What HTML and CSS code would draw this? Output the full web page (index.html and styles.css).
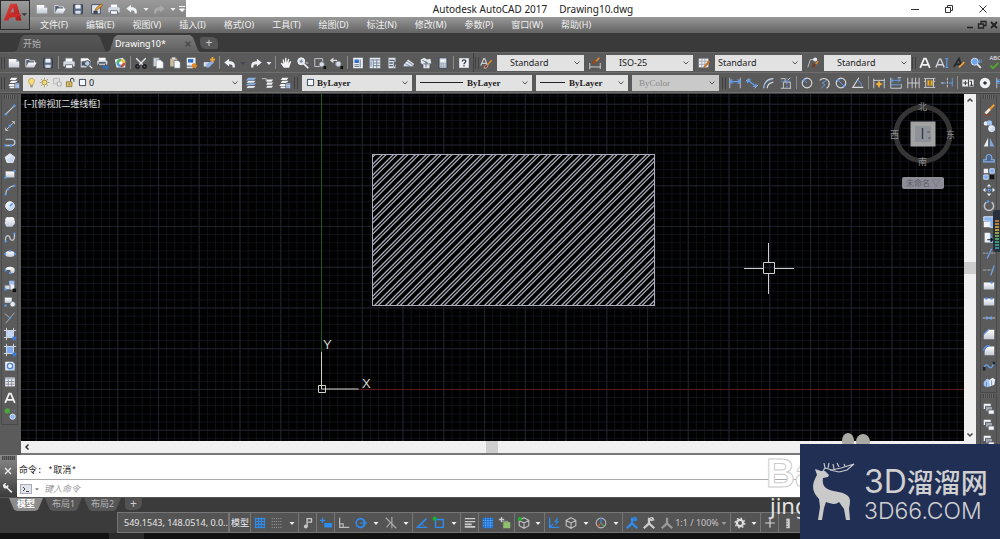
FILE: index.html
```html
<!DOCTYPE html>
<html lang="zh-CN">
<head>
<meta charset="utf-8">
<title>Autodesk AutoCAD 2017 - Drawing10.dwg</title>
<link rel="stylesheet" href="styles.css">
</head>
<body>
<svg class="defs" aria-hidden="true">
<defs>
<linearGradient id="gw" x1="0" y1="0" x2="0" y2="1"><stop offset="0" stop-color="#fff"/><stop offset="1" stop-color="#c3cad6"/></linearGradient>
<linearGradient id="gb" x1="0" y1="0" x2="1" y2="1"><stop offset="0" stop-color="#fff"/><stop offset="1" stop-color="#a9c4ea"/></linearGradient>
<linearGradient id="gr" x1="0" y1="0" x2="1" y2="1"><stop offset="0" stop-color="#e8453c"/><stop offset="1" stop-color="#a3161b"/></linearGradient>
</defs>
<symbol id="new" viewBox="0 0 16 16"><path d="M2 3.500h8.500l3.500 3V13H2z" fill="url(#gw)"/><path d="M10.500 3.500v3H14z" fill="#8d97a8"/></symbol>
<symbol id="open" viewBox="0 0 16 16"><path d="M2 12.500V4h4l1 1.500h5V8" fill="#56606e" stroke="#dfe4ec"/><path d="M2 13l3-5.500h9.500l-3 5.500z" fill="url(#gw)"/></symbol>
<symbol id="save" viewBox="0 0 16 16"><path d="M3 3h10v10.500H3z" fill="#5d6b84" stroke="#2c3648"/><path d="M5 3h6v4.500H5z" fill="#eef2f8"/><path d="M5 10h6v3.500H5z" fill="#d8dfea"/></symbol>
<symbol id="saveas" viewBox="0 0 16 16"><path d="M3 3h10v10.500H3z" fill="#e1e6ee" stroke="#3b4658"/><path d="M5 10h5v3.500H5z" fill="#3b4658"/><path d="M7 10l1-3 6-5 1.500 2-6 5z" fill="#e9a23b" stroke="#6b4a1b" stroke-width=".7"/></symbol>
<symbol id="print" viewBox="0 0 16 16"><path d="M4 2.500h8V7H4z" fill="#fff" stroke="#7f8a99" stroke-width=".7"/><rect x="1.500" y="6" width="13" height="6" rx="1.500" fill="#d3d9e3"/><path d="M4 10h8v4H4z" fill="#fff" stroke="#5c6777"/></symbol>
<symbol id="preview" viewBox="0 0 16 16"><path d="M2 2.500h8l3 3v5L8 13H2z" fill="url(#gw)"/><path d="M3 6h9v5H3z" fill="#4a5362"/><circle cx="9.500" cy="8.500" r="3.200" fill="#bcc8dc" stroke="#333c4a"/><path d="M12 11l3 3" stroke="#eee" stroke-width="1.600"/></symbol>
<symbol id="publish" viewBox="0 0 16 16"><path d="M3 2h8v4H3z" fill="#fff"/><rect x="1.500" y="5" width="11.500" height="5" rx="1" fill="#cdd4df"/><path d="M3 7.500h8M3 9h8v2H3z" stroke="#39424f" fill="#fff"/><path d="M7 12h4v-2l4 3-4 3v-2H7z" fill="#2b6fc4"/></symbol>
<symbol id="globe" viewBox="0 0 16 16"><path d="M2 4l9-2 3 3v8H4z" fill="#e9edf3"/><circle cx="9" cy="8" r="5" fill="#4aa3d8"/><path d="M9 3a5 5 0 0 1 5 5H9z" fill="#f0c342"/><path d="M9 13a5 5 0 0 0 5-5H9z" fill="#d64d3d"/><path d="M9 3a5 5 0 0 0-5 5l5 0z" fill="#53b56a"/><circle cx="9" cy="8" r="2" fill="#fff"/></symbol>
<symbol id="cut" viewBox="0 0 16 16"><path d="M2.500 2.500l8.500 8.500M13.500 2.500L5 11" stroke="#e9edf2" stroke-width="1.600"/><circle cx="4" cy="12" r="2" fill="none" stroke="#17191d" stroke-width="1.600"/><circle cx="12" cy="12" r="2" fill="none" stroke="#17191d" stroke-width="1.600"/></symbol>
<symbol id="copy" viewBox="0 0 16 16"><path d="M2.500 2h7v10h-7z" fill="#cfd6e0" stroke="#777"/><path d="M6 4.500h5l3 3V14H6z" fill="#fafbfd" stroke="#7b8594" stroke-width=".7"/></symbol>
<symbol id="paste" viewBox="0 0 16 16"><path d="M2.500 3h8v9h-8z" fill="#cbb9a0"/><path d="M4.500 1.500h4v2h-4z" fill="#dde2ea"/><path d="M7 5h4.500L14 7.500V14H7z" fill="#f7f9fc" stroke="#555e6b" stroke-width=".7"/></symbol>
<symbol id="match" viewBox="0 0 16 16"><path d="M2 2h10v9H2z" fill="#eef2f8"/><path d="M3.500 3.500h6v4h-6z" fill="#2b70c8"/><path d="M2 12h7v2H2z" fill="#d7dde7"/><path d="M8 9l3-1 3 3-2 3-4-1z" fill="#e08a2c"/></symbol>
<symbol id="bedit" viewBox="0 0 16 16"><path d="M2 7h6v5H2z" fill="#d9e0ec"/><path d="M5 9l7-4 2 2-6 6H5z" fill="#8faee0"/><path d="M12 1v6M9 4h6" stroke="#f1a72d" stroke-width="2"/></symbol>
<symbol id="undo" viewBox="0 0 16 16"><path d="M7 3v3c5 0 7 2 6.500 7H11c.3-3-1-3.700-4-3.700V12L1.500 7.500z" fill="#eef1f6"/></symbol>
<symbol id="redo" viewBox="0 0 16 16"><path d="M9 3v3c-5 0-7 2-6.500 7H5c-.3-3 1-3.700 4-3.700V12l5.500-4.500z" fill="currentColor"/></symbol>
<symbol id="tri" viewBox="0 0 8 16"><path d="M1.500 7h5L4 10z" fill="currentColor"/></symbol>
<symbol id="hand" viewBox="0 0 16 16"><path d="M5.500 13.500L2 8.500l1-1 2 1.500-1-5 1.200-.4L6.800 8 7 2h1.400l.3 5.700L10.500 3l1.200.4-.9 5 2-2.700 1.200.7-2.500 7z" fill="#f4f5f8"/></symbol>
<symbol id="zoomrt" viewBox="0 0 16 16"><circle cx="6" cy="6" r="4" fill="#dfe7f3" stroke="#f5f7fa"/><path d="M6 4v4M4 6h4" stroke="#6b7686"/><path d="M9 9l5 5" stroke="#eceff3" stroke-width="2"/><path d="M11 8h3" stroke="#ddd"/></symbol>
<symbol id="zoomwin" viewBox="0 0 16 16"><path d="M2 3h9v9H2z" fill="none" stroke="#cfd3da"/><circle cx="10" cy="9.500" r="3" fill="#d4dcea" stroke="#777"/><path d="M12 11.500h3V15h-3z" fill="#111"/></symbol>
<symbol id="zoomprev" viewBox="0 0 16 16"><path d="M1 5h7M4 2.500L1 5l3 2.500" stroke="#ddd" fill="none" stroke-width="1.400"/><circle cx="9.500" cy="9" r="3" fill="#d4dcea" stroke="#8d939c"/><path d="M12 11.500h3V15h-3z" fill="#111"/></symbol>
<symbol id="props" viewBox="0 0 16 16"><path d="M2.500 2h11v12h-11z" fill="#eef2f8"/><path d="M4 4h5v4H4z" fill="#2d6fc6"/><path d="M10.500 4v9M4 10h5M4 12h5" stroke="#59657a"/></symbol>
<symbol id="dc" viewBox="0 0 16 16"><path d="M2 2h12v12H2z" fill="#e6eaf1"/><path d="M2 4.500h12M6 4v10M10 4v10M6 8h8M6 11h8" stroke="#6e7b8e"/><path d="M3.500 6v6" stroke="#3b76c6"/></symbol>
<symbol id="tp" viewBox="0 0 16 16"><path d="M4 2h8v12H4z" fill="#dce2ec"/><path d="M5 5h6M5 8h4M5 11h4" stroke="#58626f" stroke-width="1.500"/><path d="M10 6l3 1-3 7z" fill="#56606c"/></symbol>
<symbol id="ssm" viewBox="0 0 16 16"><path d="M2 10l5-6 7 5-3 3H2z" fill="#dde3ec"/><path d="M3 12h11M6 6l6 4M4 9l6 3" stroke="#76818f"/></symbol>
<symbol id="markup" viewBox="0 0 16 16"><path d="M2 4l4-2 3 2 4-1 1 5-2 2v4H5v-4L2 8z" fill="#e2e6ed"/><path d="M5 9h8M8 6v7M4 5l6 3" stroke="#5c6673"/></symbol>
<symbol id="calc" viewBox="0 0 16 16"><path d="M3.500 2h9v12h-9z" fill="#c9d0dc" stroke="#394351"/><path d="M5 4h6v2.500H5z" fill="#f5f8fc"/><path d="M5 9h6M5 11.500h6" stroke="#6c7788" stroke-dasharray="1.500 1"/></symbol>
<symbol id="help" viewBox="0 0 16 16"><rect x="2.500" y="2.500" width="11" height="11" fill="#eef0f4"/><path d="M6 6.300c0-2.500 4.200-2.300 4 0-.1 1.400-2 1.500-2 3M8 10.500V12" stroke="#303844" stroke-width="1.500" fill="none"/></symbol>
<symbol id="brush" viewBox="0 0 16 16"><path d="M14.500 5l-5 5" stroke="#e0892c" stroke-width="1.800"/><path d="M6 14c0-3 2-4.500 4-4.500.5 2-.5 5-4 4.500z" fill="#8a3f1b" stroke="#caa"/></symbol>
<symbol id="A" viewBox="0 0 16 16"><path d="M2.500 13.500L7 3h2l4.500 10.500M5 10h6" stroke="#f2f3f5" stroke-width="2" fill="none"/></symbol>
<symbol id="Ab" viewBox="0 0 16 16"><path d="M2 11L5.500 3h1L9 9M3.500 8.500H8" stroke="#c9cdd5" stroke-width="1.400" fill="none"/><use href="#brush"/></symbol>
<symbol id="AI" viewBox="0 0 16 16"><path d="M1 13L5 3.500h1.500L10.500 13M3 10h6" stroke="#d4d8e0" stroke-width="1.500" fill="none"/><path d="M13.500 3v10M12 3h3M12 13h3" stroke="#5d9bea" stroke-width="1.300"/></symbol>
<symbol id="Ap" viewBox="0 0 16 16"><path d="M2 12.500L8 3l3 9M4.500 9.500H10" stroke="#25282d" stroke-width="2" fill="none"/><path d="M8 13l6-6" stroke="#f0a238" stroke-width="2"/></symbol>
<symbol id="find" viewBox="0 0 16 16"><circle cx="6.500" cy="6.500" r="4" fill="#6fa7ef" stroke="#dfe8f5"/><path d="M9.500 9.500l4 4" stroke="#e7eaee" stroke-width="2"/><path d="M12 4v4M14 4v4" stroke="#5e9bee"/></symbol>
<symbol id="check" viewBox="0 0 16 16"><path d="M5 11l3 3 6-6" stroke="#55a630" stroke-width="2.200" fill="none"/></symbol>
<symbol id="dimb" viewBox="0 0 16 16"><path d="M2 8v7M14 8v7M2 12.500h12" stroke="#d6d9df"/><path d="M3.500 8l4-4 3 2-3 4z" fill="#8a4a23"/><path d="M9 6l4-4" stroke="#e0892c" stroke-width="2"/></symbol>
<symbol id="tabb" viewBox="0 0 16 16"><path d="M2 3h11v10H2z" fill="#eceff4"/><path d="M2 6h11M2 9.500h11M5.500 3v10M9 3v10" stroke="#9aa3b1"/><path d="M8 13l6-7" stroke="#c97629" stroke-width="2.400"/></symbol>
<symbol id="mlb" viewBox="0 0 16 16"><path d="M2 13l3-9h4" stroke="#ccd0d7" fill="none"/><circle cx="10.500" cy="4" r="2.300" fill="#e5e8ed"/><path d="M7 13c0-4 2-5 4-4.500 0 3-1 5-4 4.500z" fill="#7b3b1b"/><path d="M11 9l3-3" stroke="#e0892c" stroke-width="1.800"/></symbol>
<symbol id="layers" viewBox="0 0 16 16"><path d="M5 2h7l-2 2.500H3zM5 5.500h7L10 8H3zM3 9h6v2.500H1.500zM3 12h6v2H3z" fill="#f0f2f6"/><path d="M9 8h5.500v6.500H9z" fill="#dfe6f2" stroke="#4c5562"/><path d="M10 10h3.500M10 12.500h3.500" stroke="#3d7bd0"/></symbol>
<symbol id="lay1" viewBox="0 0 16 16"><path d="M5 2h9l-3 3H2zM4.500 8H14l-3 2.500H2z" fill="#8db2e8"/><path d="M4.500 11H14l-3 3H2zM5 5h9l-3 3H2z" fill="#f1f4f8" stroke="#333b48" stroke-width=".6"/></symbol>
<symbol id="lay2" viewBox="0 0 16 16"><path d="M7 4h7l-2 2.500H6zM7 7.500h7L12 10H6zM7 11h7l-2 2.500H6z" fill="#eef1f5"/><path d="M1 3h5v3" stroke="#ccc" fill="none"/></symbol>
<symbol id="bulb" viewBox="0 0 16 16"><path d="M6 10C1.500 6 4.500 2 8 2s6.500 4 2 8v2H6z" fill="#f6dc7a" stroke="#a07f22" stroke-width=".8"/><path d="M6 13h4M6.500 14.500h3" stroke="#646464"/></symbol>
<symbol id="sun" viewBox="0 0 16 16"><circle cx="8" cy="8" r="3.500" fill="#f2da73" stroke="#8d7a35"/><path d="M8 1v2.500M8 12.500V15M1 8h2.500M12.500 8H15M3 3l2 2M11 11l2 2M13 3l-2 2M5 11l-2 2" stroke="#8d7a35"/></symbol>
<symbol id="vpf" viewBox="0 0 16 16"><path d="M2 2h9v8H2z" fill="#ddd" stroke="#aaa"/><circle cx="10.500" cy="10" r="3" fill="#eee" stroke="#aaa" stroke-width="1.500"/></symbol>
<symbol id="lock" viewBox="0 0 16 16"><path d="M8 7V4.500a2.500 2.500 0 0 1 5 0V7" fill="none" stroke="#555" stroke-width="1.500"/><path d="M2 7h8v7H2z" fill="#e2c763" stroke="#6a5a24"/><path d="M6 9v3" stroke="#333"/></symbol>
<symbol id="sq" viewBox="0 0 16 16"><path d="M2.500 2.500h11v11h-11z" fill="#f4f8ff" stroke="#222e44" stroke-width="1.500"/></symbol>
<symbol id="chev" viewBox="0 0 8 16"><path d="M1.500 6.500L4 9l2.500-2.500" stroke="#555" fill="none"/></symbol>
<symbol id="dlin" viewBox="0 0 16 16"><path d="M2 2v12M14 2v12" stroke="#c7cad0"/><path d="M2 6.500h12M5 4L2 6.500 5 9M11 4l3 2.500L11 9" stroke="#62a0ef" fill="none" stroke-width="1.300"/></symbol>
<symbol id="dali" viewBox="0 0 16 16"><path d="M1 6l4-3M11 14l4-4" stroke="#c7cad0"/><path d="M3 4.500l9.500 7.500M3 8V4.500h3.500M12.500 8.500V12H9" stroke="#62a0ef" fill="none" stroke-width="1.300"/></symbol>
<symbol id="darc" viewBox="0 0 16 16"><path d="M2 14C2 8 6 3 13 3M6 14c0-4 2-6 7-7" stroke="#d6d9de" fill="none" stroke-width="1.300"/><path d="M2 13C3 8 6 5 12 4" stroke="#62a0ef" fill="none"/></symbol>
<symbol id="dord" viewBox="0 0 16 16"><path d="M2 3h5v4M5 14V7h8v7M2 14h12M13 2l-3 3" stroke="#cfd2d8" fill="none"/><path d="M2 6h12M9 2v12" stroke="#62a0ef" stroke-dasharray="2 1"/></symbol>
<symbol id="drad" viewBox="0 0 16 16"><circle cx="8" cy="8" r="5.500" fill="none" stroke="#d6d9de" stroke-width="1.300"/><path d="M8 8L4 4M4 7V4h3" stroke="#62a0ef" fill="none"/></symbol>
<symbol id="djog" viewBox="0 0 16 16"><path d="M3 5c4-4 10-2 11 3 0 3-1 5-3 6" fill="none" stroke="#d6d9de" stroke-width="1.300"/><path d="M5 14l4-4-3-2 5-3" stroke="#62a0ef" fill="none"/></symbol>
<symbol id="ddia" viewBox="0 0 16 16"><circle cx="8" cy="8" r="5.500" fill="none" stroke="#d6d9de" stroke-width="1.300"/><path d="M4 4l8 8M4 7V4h3M12 9v3H9" stroke="#62a0ef" fill="none"/></symbol>
<symbol id="dang" viewBox="0 0 16 16"><path d="M9 2L2 13h12" fill="none" stroke="#d6d9de" stroke-width="1.300"/><path d="M7 5c4 1 5 4 5 7" stroke="#62a0ef" fill="none"/></symbol>
<symbol id="dq" viewBox="0 0 16 16"><path d="M2 3v11M14 3v11M2 5h12" stroke="#d6d9de"/><path d="M8 5l1.500 3 3 1-3 1.500L8 14l-1.500-3.500-3-1.500 3-1z" fill="#f3b43c"/></symbol>
<symbol id="dbase" viewBox="0 0 16 16"><path d="M2 2v12M2 14h12M14 9v5M10 2h4" stroke="#d6d9de"/><path d="M2 5h11M2 10h11M5 3L2 5l3 2M10 3l3 2-3 2" stroke="#62a0ef" fill="none"/></symbol>
<symbol id="dcont" viewBox="0 0 16 16"><path d="M2 2v12M7 2v12M11 2v12M15 2v12M2 8h13" stroke="#d6d9de"/></symbol>
<symbol id="dspace" viewBox="0 0 16 16"><path d="M1 3h13M1 13h13M3 3v10M12 3v10M1 6h2M12 6h2" stroke="#d6d9de"/><path d="M5 5h6v6H5z" fill="#e6ae33"/><path d="M8 5v6" stroke="#50421c"/></symbol>
<symbol id="dbrk" viewBox="0 0 16 16"><path d="M2 8h5M10 8h5M14 2v10" stroke="#62a0ef"/><path d="M8.500 2v12M1 8h4" stroke="#c9ccd2" stroke-dasharray="3 1"/></symbol>
<symbol id="tol" viewBox="0 0 16 16"><path d="M1.500 4h13v8h-13z" fill="#eceef2"/><path d="M8.500 4v8M2.500 8h5M5 5.500v5M10 6h2v5M10 10.500h4" stroke="#222" fill="none"/></symbol>
<symbol id="cmark" viewBox="0 0 16 16"><circle cx="8" cy="8" r="6" fill="#eef0f3"/><path d="M8 6v4M6 8h4" stroke="#222" stroke-width="1.500"/></symbol>
<symbol id="line" viewBox="0 0 16 16"><path d="M3 13L13 3" stroke="#c8ccd4" stroke-width="1.300"/><circle cx="3" cy="13" r="1.400" fill="#5b9bee"/><circle cx="13" cy="3" r="1.400" fill="#5b9bee"/></symbol>
<symbol id="xline" viewBox="0 0 16 16"><path d="M3 13L13 3M3 10v3h3M10 3h3v3" stroke="#c8ccd4" fill="none"/><circle cx="8" cy="8" r="1.600" fill="#5b9bee"/></symbol>
<symbol id="pline" viewBox="0 0 16 16"><path d="M3 5h6c6 0 6 7 0 7H3" stroke="#b9c4d8" stroke-width="1.600" fill="none"/><circle cx="3" cy="12" r="1.400" fill="#5b9bee"/><circle cx="9" cy="12" r="1.400" fill="#5b9bee"/></symbol>
<symbol id="poly" viewBox="0 0 16 16"><path d="M8 3l5.500 4-2 6h-7l-2-6z" fill="url(#gb)" stroke="#f4f4f8"/></symbol>
<symbol id="rect" viewBox="0 0 16 16"><path d="M3 5h10v7H3z" fill="url(#gw)"/><circle cx="13" cy="4.500" r="1.400" fill="#5b9bee"/><circle cx="3" cy="12" r="1.400" fill="#5b9bee"/></symbol>
<symbol id="arc" viewBox="0 0 16 16"><path d="M3 13C3 8 7 4 13 3" stroke="#c8ccd4" fill="none" stroke-width="1.300"/><circle cx="3" cy="13" r="1.300" fill="#5b9bee"/><circle cx="6" cy="7" r="1.300" fill="#5b9bee"/><circle cx="13" cy="3" r="1.300" fill="#5b9bee"/></symbol>
<symbol id="circ" viewBox="0 0 16 16"><circle cx="8" cy="8" r="5" fill="url(#gb)" stroke="#eef1f7"/><path d="M8 8l3-3" stroke="#3f87e5" stroke-width="1.500"/></symbol>
<symbol id="cloud" viewBox="0 0 16 16"><path d="M3.500 3c2-1.500 3.500 0 4.500-.5 3-1 6 1 5 3.500 1.500 2 .5 5-1 5.500-1 3-4 2-5 1.500-2 1-4.500 0-4-2C1.500 9.500 2 7.500 3 7c-1-1-.5-3 .5-4z" fill="url(#gw)"/></symbol>
<symbol id="spline" viewBox="0 0 16 16"><path d="M3 12C2 4 7 4 8 8s6 4 5-5" stroke="#c8ccd4" fill="none" stroke-width="1.400"/><circle cx="3" cy="12" r="1.300" fill="#5b9bee"/><circle cx="13" cy="3" r="1.300" fill="#5b9bee"/></symbol>
<symbol id="ell" viewBox="0 0 16 16"><ellipse cx="8" cy="8" rx="5.500" ry="3.500" fill="url(#gw)"/><circle cx="2.500" cy="8" r="1.300" fill="#5b9bee"/><circle cx="13.500" cy="8" r="1.300" fill="#5b9bee"/><circle cx="8" cy="4.500" r="1.300" fill="#5b9bee"/></symbol>
<symbol id="ella" viewBox="0 0 16 16"><path d="M2.500 8c0-5 11-5 11 0s-5 4-5 3V8z" fill="url(#gw)"/><circle cx="8" cy="11.500" r="1.300" fill="#5b9bee"/><circle cx="3" cy="8.500" r="1.300" fill="#5b9bee"/></symbol>
<symbol id="ins" viewBox="0 0 16 16"><path d="M7 2h6v6H7z" fill="#9fc0ef"/><circle cx="10" cy="9" r="3" fill="#eef1f7"/><path d="M2 7h6v5H2z" fill="#d6dce7" stroke="#687384"/><path d="M11 11h4v4h-4z" fill="#101010"/><circle cx="3" cy="12" r="1.300" fill="#5b9bee"/></symbol>
<symbol id="blk" viewBox="0 0 16 16"><path d="M2 3h8v6H2z" fill="url(#gw)"/><circle cx="11" cy="10.500" r="3" fill="#eceff5" stroke="#747e8e"/><circle cx="3" cy="12" r="1.400" fill="#5b9bee"/></symbol>
<symbol id="pt" viewBox="0 0 16 16"><path d="M2 3l6 5M13 2L3 14" stroke="#b4b8c0"/><circle cx="8" cy="8" r="1.300" fill="#5b9bee"/></symbol>
<symbol id="hat" viewBox="0 0 16 16"><path d="M4 4h8v8H4z" fill="#d5e3f8"/><path d="M4 1v14M12 1v14M1 4h14M1 12h14" stroke="#dce1ea"/><path d="M4.500 5.500h7M4.500 8h7M4.500 10.500h7" stroke="#6b9de6" stroke-dasharray="1 1"/><path d="M11 11h4v4h-4z" fill="#3a7bd9"/></symbol>
<symbol id="grad" viewBox="0 0 16 16"><path d="M4 4h8v8H4z" fill="#7fabee"/><path d="M4 1v14M12 1v14M1 4h14M1 12h14" stroke="#dce1ea"/><path d="M11 11h4v4h-4z" fill="#3a7bd9"/></symbol>
<symbol id="reg" viewBox="0 0 16 16"><path d="M2.500 3H11l2.500 2.500V13h-11z" fill="url(#gb)"/><circle cx="8" cy="8" r="3" fill="#e7effb" stroke="#5380c0" stroke-width="1.500"/></symbol>
<symbol id="tab" viewBox="0 0 16 16"><path d="M2.500 3h11v10h-11z" fill="#f0f2f5"/><path d="M2.500 4h11" stroke="#aeb7c5" stroke-width="2"/><path d="M3 7.500h10M3 10.500h10M6 5v8M10 5v8" stroke="#7b8391"/></symbol>
<symbol id="add" viewBox="0 0 16 16"><circle cx="5" cy="4.500" r="3" fill="#4da63b"/><circle cx="11" cy="11" r="3" fill="#8bb7f0" stroke="#e8eef8"/><path d="M10 4h3v3" stroke="#6b84a8" fill="none" stroke-dasharray="1 1"/></symbol>
<symbol id="erase" viewBox="0 0 16 16"><path d="M14 2L8 8" stroke="#f09b2e" stroke-width="2.400"/><path d="M9 7L4 12" stroke="#f4e9d8" stroke-width="3"/><path d="M2 13.500h9" stroke="#a13c22"/></symbol>
<symbol id="copy2" viewBox="0 0 16 16"><circle cx="4.500" cy="5" r="2.500" fill="#eceff4"/><circle cx="8.500" cy="4.500" r="3" fill="#9cc1f2"/><circle cx="11" cy="11" r="3.500" fill="url(#gb)" stroke="#e5edf8"/></symbol>
<symbol id="mir" viewBox="0 0 16 16"><path d="M7 3v10H2z" fill="#e9ecf1"/><path d="M9 3v10h5z" fill="#7ea9df"/></symbol>
<symbol id="off" viewBox="0 0 16 16"><path d="M2 12.500h12V10h-3c2-8-8-8-6 0H2z" fill="#50637f" stroke="#7fafee" stroke-width="1.300"/></symbol>
<symbol id="arr" viewBox="0 0 16 16"><path d="M2 2h5v5H2z" fill="#eef1f5"/><path d="M9 2h5v5H9zM2 9h5v5H2z" fill="#78aaf0" stroke="#d5e3f7"/><path d="M9 9h5v5H9z" fill="#101317"/></symbol>
<symbol id="mov" viewBox="0 0 16 16"><path d="M8 1l2.500 3h-5zM8 15l2.500-3h-5zM1 8l3-2.500v5zM15 8l-3-2.500v5z" fill="#e9ecf1"/><path d="M8 4v8M4 8h8" stroke="#69a4ef" stroke-width="1.500" stroke-dasharray="1.500 1"/></symbol>
<symbol id="rot" viewBox="0 0 16 16"><path d="M5 3.500a5.300 5.300 0 1 0 6 0" stroke="#bfc4cd" stroke-width="1.700" fill="none"/><circle cx="7" cy="2.800" r="1.500" fill="#5b9bee"/></symbol>
<symbol id="scl" viewBox="0 0 16 16"><path d="M2 2h12v12H9V7H2z" fill="#89b3ee" stroke="#e5eefb"/><path d="M2 8h7v6H2z" fill="#f1f3f7"/></symbol>
<symbol id="str" viewBox="0 0 16 16"><path d="M3 2h6l4 11H3z" fill="#eff2f7"/><path d="M9 2l5 11H9z" fill="#6fa5ee"/><path d="M6 10h6M10 8l2 2-2 2" stroke="#111" fill="none" stroke-width="1.400"/></symbol>
<symbol id="trim" viewBox="0 0 16 16"><path d="M6 13l5-11" stroke="#6fa5ee" stroke-width="1.400"/><path d="M1 7h6M10 7h5" stroke="#b0b6c0" stroke-dasharray="3 1"/></symbol>
<symbol id="ext" viewBox="0 0 16 16"><path d="M10 14l4-11" stroke="#6fa5ee" stroke-width="1.400"/><path d="M1 8h11" stroke="#b0b6c0" stroke-dasharray="4 1"/></symbol>
<symbol id="brk1" viewBox="0 0 16 16"><path d="M2 4h12v8H2z" fill="url(#gw)"/><circle cx="11" cy="4" r="1.500" fill="#4f91e8"/></symbol>
<symbol id="brk2" viewBox="0 0 16 16"><path d="M2 4h12v8H2z" fill="url(#gw)"/><circle cx="5" cy="4" r="1.500" fill="#4f91e8"/><circle cx="11" cy="4" r="1.500" fill="#4f91e8"/></symbol>
<symbol id="join" viewBox="0 0 16 16"><path d="M1 8h14" stroke="#a7afbb" stroke-width="1.300"/><path d="M5 5.500L8 8l-3 2.500zM11 5.500L8 8l3 2.500z" fill="#69a4ef"/></symbol>
<symbol id="cham" viewBox="0 0 16 16"><path d="M8 3h6v11H2V9z" fill="url(#gw)"/><path d="M2 8.500L8 2.500" stroke="#69a4ef" stroke-width="1.400"/></symbol>
<symbol id="fil" viewBox="0 0 16 16"><path d="M9 4h5v10H3v-3c0-4 2-7 6-7z" fill="url(#gw)"/><path d="M2 9c0-4 3-6 7-6" stroke="#4f91e8" stroke-width="1.600" fill="none"/></symbol>
<symbol id="blend" viewBox="0 0 16 16"><path d="M2 12c2-9 5-4 6-3s4 3 5-5" stroke="#69a4ef" fill="none" stroke-width="1.500"/><path d="M1 9h3v4H1zM12 3h3v3h-3z" fill="#20242b"/></symbol>
<symbol id="expl" viewBox="0 0 16 16"><path d="M2 8l4-4 3 2v7l-4 1-3-2z" fill="#a8c8f2"/><path d="M8 6l4-3 3 2-1 6-5 2z" fill="#e8f0fb"/><path d="M5 8v6M11 6v6" stroke="#5987c8"/></symbol>
<symbol id="ord" viewBox="0 0 16 16"><path d="M2 2h8v6H2z" fill="#eef0f4"/><path d="M4 5h8v6H4z" fill="#9fa6b1" stroke="#50555d"/><path d="M7 9h7v5H7z" fill="#f3f5f8" stroke="#50555d"/></symbol>
<symbol id="sgrid" viewBox="0 0 16 16"><path d="M3 2v12M6.300 2v12M9.600 2v12M13 2v12M2 3h12M2 6.300h12M2 9.600h12M2 13h12" stroke="#2d8cf0" stroke-width="1.300"/></symbol>
<symbol id="ssnap" viewBox="0 0 16 16"><path d="M2 3h12M2 6.300h12M2 9.600h12M2 13h12" stroke="#b4b4b4" stroke-dasharray="1 1.500"/></symbol>
<symbol id="sinf" viewBox="0 0 16 16"><path d="M7 12V3h5v4H8" stroke="#c6c6c6" fill="none" stroke-width="1.600"/><circle cx="5.500" cy="12" r="2.200" fill="#c6c6c6"/></symbol>
<symbol id="sdyn" viewBox="0 0 16 16"><path d="M4 2v6M1 5h6" stroke="#2d8cf0" stroke-width="1.600"/><rect x="6" y="8" width="9" height="5" rx="1" fill="#2d8cf0"/></symbol>
<symbol id="sort" viewBox="0 0 16 16"><path d="M3 2v11h11M3 9h4v4" stroke="#bdbdbd" fill="none" stroke-width="1.400"/></symbol>
<symbol id="spol" viewBox="0 0 16 16"><circle cx="7.500" cy="8" r="5" stroke="#2d8cf0" stroke-width="1.800" fill="none"/><path d="M7 8h8M10 5l3 3-3 3" stroke="#2d8cf0" stroke-width="1.400" fill="none"/></symbol>
<symbol id="siso" viewBox="0 0 16 16"><path d="M2 2l12 12M9 1v13M3 13l4-5" stroke="#adadad" stroke-width="1.300"/></symbol>
<symbol id="strk" viewBox="0 0 16 16"><path d="M13 3L3 13h11" stroke="#2d8cf0" stroke-width="1.700" fill="none"/><path d="M7 8l4 4" stroke="#2d8cf0"/></symbol>
<symbol id="sosn" viewBox="0 0 16 16"><path d="M4 4h9v9H4z" stroke="#2d8cf0" stroke-width="1.600" fill="none"/><circle cx="3" cy="3" r="2.300" fill="#16b02b"/></symbol>
<symbol id="slwt" viewBox="0 0 16 16"><path d="M2 3h12M2 6.500h12" stroke="#ccc" stroke-width="1.400"/><path d="M2 9.500h8M2 12.500h12" stroke="#ccc" stroke-width="2"/></symbol>
<symbol id="stra" viewBox="0 0 16 16"><path d="M2 2h12v12H2z" fill="#1c6fd1"/><path d="M2 5h12M2 8h12M2 11h12M5 2v12M8 2v12M11 2v12" stroke="#6cb1fa" stroke-dasharray="1.500 1"/></symbol>
<symbol id="scyc" viewBox="0 0 16 16"><path d="M4 1v6M1 4h6" stroke="#ccc" stroke-width="1.500"/><path d="M5 6h6v2" stroke="#aaa" fill="none"/><path d="M6 7h8v7H6z" fill="#8fbf6c"/></symbol>
<symbol id="scube" viewBox="0 0 16 16"><path d="M8 2l5.500 3v6L8 14l-5.500-3V5zM2.500 5L8 8l5.500-3M8 8v6" stroke="#bebebe" stroke-width="1.300" fill="none"/></symbol>
<symbol id="s3d" viewBox="0 0 16 16"><use href="#scube"/><circle cx="3" cy="3.500" r="2.300" fill="#16b02b"/></symbol>
<symbol id="sucs" viewBox="0 0 16 16"><path d="M3 2v11h11M3 13l4-4" stroke="#2d8cf0" stroke-width="1.500" fill="none"/><path d="M12 2L8 7h3l-2 4 5-5h-3l2-4z" fill="#2d8cf0"/></symbol>
<symbol id="sgiz" viewBox="0 0 16 16"><circle cx="8" cy="8" r="5.500" stroke="#b8b8b8" fill="none" stroke-width="1.300"/><path d="M8 2v6" stroke="#3684dd" stroke-width="1.500"/><path d="M8 8l-4 4" stroke="#d15543" stroke-width="1.500"/><path d="M8 8l4 4" stroke="#49a35a" stroke-width="1.500"/></symbol>
<symbol id="sann" viewBox="0 0 16 16"><path d="M8 2v6.500L2 14M8 8.500l6 5.500" stroke="currentColor" stroke-width="2.600" fill="none"/><path d="M5 11l3-5 3 5-3-2z" fill="currentColor"/></symbol>
<symbol id="sann2" viewBox="0 0 16 16"><use href="#sann"/><path d="M10 5l3-3M13 5l1-1" stroke="currentColor" stroke-width="1.600"/><circle cx="11" cy="3.500" r="1.800" fill="none" stroke="currentColor" stroke-width="1.300"/></symbol>
<symbol id="sgear" viewBox="0 0 16 16"><circle cx="8" cy="8" r="3.500" stroke="#ddd" stroke-width="2.600" fill="none"/><circle cx="8" cy="8" r="5.500" stroke="#ddd" stroke-width="1.500" stroke-dasharray="2 2.300" fill="none"/></symbol>
<symbol id="splus" viewBox="0 0 16 16"><path d="M8 2.500v11M2.500 8h11" stroke="#d2d2d2" stroke-width="1.400"/></symbol>
<symbol id="siu" viewBox="0 0 16 16"><path d="M6 3h4v11H6z" fill="#d0d0d0"/><path d="M6 6h2M6 9h2M6 12h2" stroke="#777"/></symbol>
</svg>

<div class="app">
<header class="head">
  <button class="appbtn" aria-label="应用程序菜单">
    <svg viewBox="0 0 30 30"><path d="M3 21L10 3h7l5 18h-6l-1-5H9l-1 5zM10 12h4l-1-5z" fill="url(#gr)"/><path d="M3 21l7-6 10-2 2 3-12 2z" fill="#c92a2a"/><path d="M22 13h6l-3 3z" fill="#30343a"/></svg>
  </button>
  <div class="qat">
    <button aria-label="新建"><svg><use href="#new"/></svg></button>
    <button aria-label="打开"><svg><use href="#open"/></svg></button>
    <button aria-label="保存"><svg><use href="#save"/></svg></button>
    <button aria-label="另存为"><svg><use href="#saveas"/></svg></button>
    <button aria-label="打印"><svg><use href="#print"/></svg></button>
    <button aria-label="放弃"><svg><use href="#undo"/></svg></button>
    <button class="dd" aria-label="放弃列表"><svg><use href="#tri"/></svg></button>
    <button class="dim" aria-label="重做"><svg><use href="#redo"/></svg></button>
    <button class="dd" aria-label="重做列表"><svg><use href="#tri"/></svg></button>
    <button class="dd end" aria-label="自定义"><svg viewBox="0 0 8 16"><path d="M1 5.500h6M1.500 8h5L4 10.500z" stroke="#fff" fill="#fff"/></svg></button>
  </div>
  <h1 class="title"><span>Autodesk AutoCAD 2017</span><span>Drawing10.dwg</span></h1>
  <div class="win">
    <button aria-label="最小化"><svg viewBox="0 0 16 16"><path d="M4 8.500h8" stroke="#333"/></svg></button>
    <button aria-label="还原"><svg viewBox="0 0 16 16"><path d="M4.500 6.500h5v5h-5zM6.500 6.500v-2h5v5h-2" stroke="#333" fill="none"/></svg></button>
    <button aria-label="关闭"><svg viewBox="0 0 16 16"><path d="M4.500 4.500l7 7M11.500 4.500l-7 7" stroke="#333"/></svg></button>
  </div>
  <nav class="menu">
    <a href="#">文件(F)</a><a href="#">编辑(E)</a><a href="#">视图(V)</a><a href="#">插入(I)</a><a href="#">格式(O)</a><a href="#">工具(T)</a><a href="#">绘图(D)</a><a href="#">标注(N)</a><a href="#">修改(M)</a><a href="#">参数(P)</a><a href="#">窗口(W)</a><a href="#">帮助(H)</a>
    <div class="mdi">
      <button aria-label="最小化图形"><svg viewBox="0 0 12 12"><path d="M3 8.500h6" stroke="#222" stroke-width="1.500"/></svg></button>
      <button aria-label="还原图形"><svg viewBox="0 0 12 12"><path d="M2.500 5h5v4h-5zM5 5V2.500h5v4H7.500" stroke="#222" stroke-width="1.300" fill="none"/></svg></button>
      <button aria-label="关闭图形"><svg viewBox="0 0 12 12"><path d="M3 3l6 6M9 3l-6 6" stroke="#222" stroke-width="1.800"/></svg></button>
    </div>
  </nav>
</header>

<nav class="tabs">
  <a href="#" class="tab">开始</a>
  <a href="#" class="tab on">Drawing10*<svg viewBox="0 0 8 8"><path d="M1.500 1.500l5 5M6.500 1.500l-5 5" stroke="#484848" stroke-width="1.400"/></svg></a>
  <button class="plus" aria-label="新图形">+</button>
</nav>

<div class="bar">
  <div class="grp">
    <i class="grip"></i>
    <button aria-label="新建"><svg><use href="#new"/></svg></button><button aria-label="打开"><svg><use href="#open"/></svg></button><button aria-label="保存"><svg><use href="#save"/></svg></button>
    <i class="sep"></i>
    <button aria-label="打印"><svg><use href="#print"/></svg></button><button aria-label="打印预览"><svg><use href="#preview"/></svg></button><button aria-label="发布"><svg><use href="#publish"/></svg></button><button aria-label="三维 DWF"><svg><use href="#globe"/></svg></button>
    <i class="sep"></i>
    <button aria-label="剪切"><svg><use href="#cut"/></svg></button><button aria-label="复制"><svg><use href="#copy"/></svg></button><button aria-label="粘贴"><svg><use href="#paste"/></svg></button><button aria-label="特性匹配"><svg><use href="#match"/></svg></button><button aria-label="块编辑器"><svg><use href="#bedit"/></svg></button>
    <i class="sep"></i>
    <button aria-label="放弃"><svg><use href="#undo"/></svg></button><button class="dd dark" aria-label="放弃列表"><svg><use href="#tri"/></svg></button><button aria-label="重做"><svg><use href="#redo"/></svg></button><button class="dd" aria-label="重做列表"><svg><use href="#tri"/></svg></button>
    <i class="sep"></i>
    <button aria-label="平移"><svg><use href="#hand"/></svg></button><button aria-label="实时缩放"><svg><use href="#zoomrt"/></svg></button><button aria-label="窗口缩放"><svg><use href="#zoomwin"/></svg></button><button aria-label="缩放上一个"><svg><use href="#zoomprev"/></svg></button>
    <i class="sep"></i>
    <button aria-label="特性"><svg><use href="#props"/></svg></button><button aria-label="设计中心"><svg><use href="#dc"/></svg></button><button aria-label="工具选项板"><svg><use href="#tp"/></svg></button><button aria-label="图纸集"><svg><use href="#ssm"/></svg></button><button aria-label="标记集"><svg><use href="#markup"/></svg></button><button aria-label="计算器"><svg><use href="#calc"/></svg></button>
    <i class="sep"></i>
    <button aria-label="帮助"><svg><use href="#help"/></svg></button>
  </div>
  <div class="grp styles">
    <i class="grip"></i>
    <button aria-label="文字样式"><svg><use href="#Ab"/></svg></button>
    <label class="combo"><select aria-label="文字样式"><option>Standard</option></select><svg class="chev"><use href="#chev"/></svg></label>
    <button aria-label="标注样式"><svg><use href="#dimb"/></svg></button>
    <label class="combo"><select aria-label="标注样式"><option>ISO-25</option></select><svg class="chev"><use href="#chev"/></svg></label>
    <button aria-label="表格样式"><svg><use href="#tabb"/></svg></button>
    <label class="combo near"><select aria-label="表格样式"><option>Standard</option></select><svg class="chev"><use href="#chev"/></svg></label>
    <button aria-label="多重引线样式"><svg><use href="#mlb"/></svg></button>
    <label class="combo"><select aria-label="多重引线样式"><option>Standard</option></select><svg class="chev"><use href="#chev"/></svg></label>
  </div>
  <div class="grp last">
    <i class="grip"></i>
    <button aria-label="多行文字"><svg><use href="#A"/></svg></button><button aria-label="单行文字"><svg><use href="#AI"/></svg></button><button aria-label="编辑文字"><svg><use href="#Ap"/></svg></button><button aria-label="查找"><svg><use href="#find"/></svg></button><button class="abc" aria-label="拼写检查"><svg><use href="#check"/></svg><span>ABC</span></button>
  </div>
</div>

<div class="bar">
  <div class="grp layer">
    <i class="grip"></i>
    <button aria-label="图层特性"><svg><use href="#layers"/></svg></button>
    <label class="combo lay"><svg><use href="#bulb"/></svg><svg><use href="#sun"/></svg><svg><use href="#vpf"/></svg><svg><use href="#lock"/></svg><svg class="s10"><use href="#sq"/></svg><select aria-label="图层"><option>0</option></select><svg class="chev"><use href="#chev"/></svg></label>
    <button aria-label="置为当前"><svg><use href="#lay1"/></svg></button><button aria-label="上一个图层"><svg><use href="#lay2"/></svg></button><button aria-label="图层状态"><svg><use href="#layers"/></svg></button>
  </div>
  <div class="grp prop">
    <i class="grip"></i>
    <label class="combo mono"><svg class="s10"><use href="#sq"/></svg><select aria-label="颜色"><option>ByLayer</option></select><svg class="chev"><use href="#chev"/></svg></label>
    <label class="combo mono wide"><i class="ln"></i><select aria-label="线型"><option>ByLayer</option></select><svg class="chev"><use href="#chev"/></svg></label>
    <label class="combo mono slim"><i class="ln short"></i><select aria-label="线宽"><option>ByLayer</option></select><svg class="chev"><use href="#chev"/></svg></label>
    <label class="combo mono off"><select aria-label="打印样式" disabled><option>ByColor</option></select><svg class="chev"><use href="#chev"/></svg></label>
  </div>
  <div class="grp dims">
    <i class="grip"></i>
    <button aria-label="线性"><svg><use href="#dlin"/></svg></button><button aria-label="对齐"><svg><use href="#dali"/></svg></button><button aria-label="弧长"><svg><use href="#darc"/></svg></button><button aria-label="坐标"><svg><use href="#dord"/></svg></button>
    <i class="sep"></i>
    <button aria-label="半径"><svg><use href="#drad"/></svg></button><button aria-label="折弯"><svg><use href="#djog"/></svg></button><button aria-label="直径"><svg><use href="#ddia"/></svg></button><button aria-label="角度"><svg><use href="#dang"/></svg></button>
    <i class="sep"></i>
    <button aria-label="快速标注"><svg><use href="#dq"/></svg></button><button aria-label="基线"><svg><use href="#dbase"/></svg></button><button aria-label="连续"><svg><use href="#dcont"/></svg></button><button aria-label="等距"><svg><use href="#dspace"/></svg></button><button aria-label="折断"><svg><use href="#dbrk"/></svg></button>
    <i class="sep"></i>
    <button aria-label="公差"><svg><use href="#tol"/></svg></button><button aria-label="圆心标记"><svg><use href="#cmark"/></svg></button><button aria-label="检验"><svg><use href="#dlin"/></svg></button>
  </div>
</div>

<main class="work">
  <div class="side left"><div class="strip">
    <i class="hgrip"></i>
    <button aria-label="直线"><svg><use href="#line"/></svg></button><button aria-label="构造线"><svg><use href="#xline"/></svg></button><button aria-label="多段线"><svg><use href="#pline"/></svg></button><button aria-label="多边形"><svg><use href="#poly"/></svg></button><button aria-label="矩形"><svg><use href="#rect"/></svg></button><button aria-label="圆弧"><svg><use href="#arc"/></svg></button><button aria-label="圆"><svg><use href="#circ"/></svg></button><button aria-label="修订云线"><svg><use href="#cloud"/></svg></button><button aria-label="样条曲线"><svg><use href="#spline"/></svg></button><button aria-label="椭圆"><svg><use href="#ell"/></svg></button><button aria-label="椭圆弧"><svg><use href="#ella"/></svg></button><button aria-label="插入块"><svg><use href="#ins"/></svg></button><button aria-label="创建块"><svg><use href="#blk"/></svg></button><button aria-label="点"><svg><use href="#pt"/></svg></button><button aria-label="图案填充"><svg><use href="#hat"/></svg></button><button aria-label="渐变色"><svg><use href="#grad"/></svg></button><button aria-label="面域"><svg><use href="#reg"/></svg></button><button aria-label="表格"><svg><use href="#tab"/></svg></button><button aria-label="多行文字"><svg><use href="#A"/></svg></button><button aria-label="添加选定对象"><svg><use href="#add"/></svg></button>
  </div></div>

  <section class="view">
    <div class="canvas">
      <svg class="drawing">
        <defs>
          <pattern id="minor" x="300" y="295" width="8.150" height="8.150" patternUnits="userSpaceOnUse"><path d="M.5 0v8.150M0 .5h8.150" stroke="#101118"/></pattern>
          <pattern id="major" x="300" y="295" width="40.750" height="40.750" patternUnits="userSpaceOnUse"><path d="M.5 0v40.750M0 .5h40.750" stroke="#1e202c"/></pattern>
          <pattern id="hatch" x="351" y="60" width="11" height="11" patternUnits="userSpaceOnUse"><path d="M-1 12L12-1M-1 1L1-1M10 12l2-2M-1 4.700L4.700-1M2.700 12L12 2.700" stroke="#a9adba" stroke-width="1.300"/></pattern>
        </defs>
        <rect width="100%" height="100%" fill="url(#minor)"/>
        <rect width="100%" height="100%" fill="url(#major)"/>
        <path d="M300.500 0v258" stroke="#1c5a1c"/>
        <line x1="337" y1="295.500" x2="100%" y2="295.500" stroke="#5c1a1a"/>
        <rect x="351.500" y="60.500" width="282" height="151" fill="#000"/>
        <rect x="351.500" y="60.500" width="282" height="151" fill="url(#hatch)" stroke="#a9adb9"/>
        <path d="M300.500 258v37h37M297.500 291.500h7v7h-7z" stroke="#d5d5cc" fill="none"/>
        <text x="302" y="255" class="axis">Y</text><text x="341" y="294" class="axis">X</text>
        <path d="M747.500 149v20M747.500 180v20M723 174.500h19M754 174.500h19M742.500 168.500h11v11h-11z" stroke="#cfcfcf" fill="none"/>
      </svg>
      <p class="vlabel">[–][俯视][二维线框]</p>
      <div class="cube">
        <svg viewBox="0 0 70 70"><circle cx="35" cy="35" r="27" fill="none" stroke="#353535" stroke-width="5"/><path d="M22.500 22.500h25v25h-25z" fill="#a2a2a2"/><path d="M27 27h16v16H27z" fill="#8f9298"/><path d="M34.500 29v11" stroke="#33363d" stroke-width="1.300"/><path d="M39 33h3M40 39h3" stroke="#5a5d66"/></svg>
        <span class="n">北</span><span class="s">南</span><span class="w">西</span><span class="e">东</span>
        <button class="ucs">未命名 ▽</button>
      </div>
    </div>
    <div class="vs"><svg viewBox="0 0 12 12"><path d="M3.500 7.500L6 5l2.500 2.500" stroke="#444" stroke-width="1.500" fill="none"/></svg><i></i><svg viewBox="0 0 12 12"><path d="M3.500 4.500L6 7l2.500-2.500" stroke="#444" stroke-width="1.500" fill="none"/></svg></div>
    <div class="hs"><svg viewBox="0 0 12 12"><path d="M7.500 3.500L5 6l2.500 2.500" stroke="#333" stroke-width="1.500" fill="none"/></svg><i></i></div>
  </section>

  <div class="side right"><div class="strip">
    <i class="hgrip"></i>
    <button aria-label="删除"><svg><use href="#erase"/></svg></button><button aria-label="复制"><svg><use href="#copy2"/></svg></button><button aria-label="镜像"><svg><use href="#mir"/></svg></button><button aria-label="偏移"><svg><use href="#off"/></svg></button><button aria-label="阵列"><svg><use href="#arr"/></svg></button><button aria-label="移动"><svg><use href="#mov"/></svg></button><button aria-label="旋转"><svg><use href="#rot"/></svg></button><button aria-label="缩放"><svg><use href="#scl"/></svg></button><button aria-label="拉伸"><svg><use href="#str"/></svg></button><button aria-label="修剪"><svg><use href="#trim"/></svg></button><button aria-label="延伸"><svg><use href="#ext"/></svg></button><button aria-label="打断于点"><svg><use href="#brk1"/></svg></button><button aria-label="打断"><svg><use href="#brk2"/></svg></button><button aria-label="合并"><svg><use href="#join"/></svg></button><button aria-label="倒角"><svg><use href="#cham"/></svg></button><button aria-label="圆角"><svg><use href="#fil"/></svg></button><button aria-label="光顺曲线"><svg><use href="#blend"/></svg></button><button aria-label="分解"><svg><use href="#expl"/></svg></button>
  </div><div class="strip">
    <i class="hgrip"></i>
    <button aria-label="前置"><svg><use href="#ord"/></svg></button><button aria-label="后置"><svg><use href="#ord"/></svg></button><button aria-label="置于对象之上"><svg><use href="#ord"/></svg></button>
  </div>
  <div class="meter"></div></div>
</main>

<section class="cmd">
  <div class="ctl"><i class="hgrip"></i>
    <button aria-label="关闭"><svg viewBox="0 0 16 16"><path d="M4 4l8 8M12 4l-8 8" stroke="#eee" stroke-width="1.800"/></svg></button>
    <button aria-label="自定义"><svg viewBox="0 0 16 16"><path d="M1.500 6C.5 3 3.500.5 6 2L4 3.500 6 5.500 8 3.500c1 2 .7 3.500-.3 4.200l6.300 5.300-1.800 1.800L6.500 8.500C4 9.500 2 8 1.500 6z" fill="#eee"/></svg></button>
  </div>
  <div class="lines">
    <p>命令: *取消*</p>
    <label><svg viewBox="0 0 12 12"><rect x=".5" y="1.500" width="11" height="9" fill="#dfe3ea" stroke="#aab"/><path d="M3 4l2 2-2 2M6 8.500h3" stroke="#444" fill="none"/></svg><svg class="t"><use href="#tri"/></svg><input placeholder="键入命令" aria-label="命令"></label>
  </div>
</section>

<nav class="ltabs">
  <a href="#" class="on">模型</a><a href="#">布局1</a><a href="#">布局2</a><button aria-label="新建布局">+</button>
</nav>

<footer class="status">
  <span class="coord">549.1543, 148.0514, 0.0...</span>
  <button class="model b">模型</button>
  <button class="b" aria-label="栅格"><svg><use href="#sgrid"/></svg></button><button aria-label="捕捉"><svg><use href="#ssnap"/></svg></button><button class="dd" aria-label="捕捉选项"><svg><use href="#tri"/></svg></button>
  <button class="b" aria-label="推断约束"><svg><use href="#sinf"/></svg></button><button class="b" aria-label="动态输入"><svg><use href="#sdyn"/></svg></button><button class="b" aria-label="正交"><svg><use href="#sort"/></svg></button><button aria-label="极轴"><svg><use href="#spol"/></svg></button><button class="dd" aria-label="极轴选项"><svg><use href="#tri"/></svg></button><button aria-label="等轴测"><svg><use href="#siso"/></svg></button><button class="dd" aria-label="等轴测选项"><svg><use href="#tri"/></svg></button>
  <button class="b" aria-label="对象追踪"><svg><use href="#strk"/></svg></button><button aria-label="对象捕捉"><svg><use href="#sosn"/></svg></button><button class="dd" aria-label="捕捉模式"><svg><use href="#tri"/></svg></button>
  <button class="b" aria-label="线宽"><svg><use href="#slwt"/></svg></button><button class="b" aria-label="透明度"><svg><use href="#stra"/></svg></button><button aria-label="选择循环"><svg><use href="#scyc"/></svg></button>
  <button class="b" aria-label="三维捕捉"><svg><use href="#s3d"/></svg></button><button class="dd" aria-label="三维捕捉选项"><svg><use href="#tri"/></svg></button>
  <button class="b" aria-label="动态 UCS"><svg><use href="#sucs"/></svg></button><button aria-label="选择过滤"><svg><use href="#scube"/></svg></button><button class="dd" aria-label="过滤选项"><svg><use href="#tri"/></svg></button><button aria-label="小控件"><svg><use href="#sgiz"/></svg></button><button class="dd" aria-label="小控件选项"><svg><use href="#tri"/></svg></button>
  <button class="b blue" aria-label="注释可见性"><svg><use href="#sann2"/></svg></button><button class="lite" aria-label="自动缩放"><svg><use href="#sann2"/></svg></button><button class="grey" aria-label="注释比例"><svg><use href="#sann"/></svg></button><button class="scale">1:1 / 100%</button><button class="dd grey" aria-label="比例列表"><svg><use href="#tri"/></svg></button>
  <button class="b" aria-label="工作空间"><svg><use href="#sgear"/></svg></button><button class="dd" aria-label="工作空间列表"><svg><use href="#tri"/></svg></button>
  <button class="b" aria-label="注释监视器"><svg><use href="#splus"/></svg></button><button class="b" aria-label="单位"><svg><use href="#siu"/></svg></button>
</footer>
<div class="under"></div>

<div class="mark">
  <svg class="paw" viewBox="0 0 32 14"><ellipse cx="8" cy="9" rx="6" ry="8" fill="#a9a9a6"/><ellipse cx="23" cy="10" rx="7" ry="8" fill="#a9a9a6"/></svg>
  <span class="bai">Bai</span><span class="jing">jing</span>
  <div class="logo">
    <svg viewBox="0 0 44 60"><path d="M3 7l6 2 4 0 4 4-1 2-5 1c-1 6 1 10 7 12 6 2 14 2 18 6 3 3 2 8 1 12l1 12h-4l-2-11-5-7c-3 3-8 2-13 0l-2 6-2 12H6l2-13-1-8C0 30-1 23 5 13z" fill="#c9c9c9"/><path d="M11 9l2-3M13 6l-1-5M13 6l7 2 9-2 13-4-7 6-8 2-9-2M16 6l1-5M22 7l-1-5M27 5l-2-4M33 4l-1-2" stroke="#c9c9c9" stroke-width="1.200" fill="none"/></svg>
    <div><p class="l1">3D<b>溜溜网</b></p><p class="l2">3D66.COM</p></div>
  </div>
</div>
</div>
</body>
</html>
```
FILE: styles.css
```css
* { box-sizing: border-box; }
body {
  margin: 0;
  background: #3b3b3b;
  font: 9px/12px "Noto Sans", "Noto Sans CJK SC", sans-serif;
  color: #e6e6e6;
}
p, h1 { margin: 0; font-weight: 400; }
a { color: inherit; text-decoration: none; }
button {
  flex: none;
  display: flex;
  align-items: center;
  justify-content: center;
  margin: 0;
  padding: 0;
  border: 0;
  background: none;
  color: #eceef2;
  font: inherit;
}
svg { display: block; flex: none; }
.defs { position: absolute; width: 0; height: 0; }
.app {
  position: relative;
  display: flex;
  flex-direction: column;
  height: 100vh;
  overflow: hidden;
}

.head {
  display: grid;
  grid-template: 17px 16px / 30px auto 1fr auto;
}
.appbtn {
  grid-row: 1 / 3;
  grid-column: 1;
  height: 30px;
  border: 1px solid #2c2c2c;
  background: linear-gradient(#9b9b9b, #707070);
  z-index: 1;
}
.appbtn svg { width: 28px; height: 28px; }
.qat {
  grid-row: 1;
  grid-column: 2;
  display: flex;
  align-items: center;
  gap: 2px;
  width: 156px;
  padding-left: 4px;
  background: linear-gradient(#9a9a9a, #858585);
}
button svg { width: 14px; height: 14px; }
.qat button, .bar button { width: 16px; height: 16px; }
.qat .dd { width: 7px; }
.qat .dim { color: #a9a9a9; }
.dd svg { width: 8px; height: 16px; }
.title {
  grid-row: 1;
  grid-column: 3;
  display: flex;
  justify-content: center;
  align-items: center;
  gap: 12px;
  background: #fff;
  color: #222;
  font-size: 10px;
}
.win { grid-row: 1; grid-column: 4; display: flex; padding-left: 18px; background: #fff; }
.win button { width: 34px; }
.win svg { width: 16px; height: 16px; }
.menu {
  grid-column: 1 / 5;
  grid-row: 2;
  display: flex;
  align-items: center;
  gap: 18px;
  padding-left: 40px;
  background: linear-gradient(#989898, #636363);
  color: #f0f0f0;
}
.mdi { display: flex; margin-left: auto; }
.mdi svg { width: 12px; height: 12px; }

.tabs {
  display: flex;
  align-items: flex-end;
  height: 20px;
  padding-left: 14px;
  background: #3a3a3a;
  border-bottom: 1px solid #666;
}
.tab {
  display: flex;
  align-items: center;
  justify-content: space-between;
  width: 93px;
  height: 17px;
  padding: 0 9px;
  background: linear-gradient(#575757, #4c4c4c);
  color: #b5b5b5;
  clip-path: polygon(0 100%, 3px 90%, 7px 15%, 10px 0, calc(100% - 10px) 0, calc(100% - 7px) 15%, calc(100% - 2px) 90%, 100% 100%);
}
.tab.on { padding: 0 8px; background: linear-gradient(#7d7d7d, #606060); color: #fff; }
.tab svg { width: 8px; height: 8px; }
.plus {
  width: 18px;
  height: 12px;
  margin: 0 0 3px 0;
  background: #565656;
  border-radius: 2px 6px 2px 6px;
  color: #ccc;
  font-size: 12px;
}

.bar {
  display: flex;
  height: 20px;
  background: #5a5a5a;
  border-bottom: 1px solid #6e6e6e;
  overflow: hidden;
}
.grp { display: flex; align-items: center; gap: 1px; flex: none; }
.grip {
  width: 4px;
  height: 12px;
  margin-left: 1px;
  border-left: 1px solid #404040;
  border-right: 1px solid #404040;
}
.sep { width: 1px; height: 13px; margin: 0 1px; background: #8b8b8b; }
.bar .dd { width: 8px; }
.bar .dark { color: #3d4654; }
.styles { border-left: 1px solid #3f3f3f; margin-left: 1px; gap: 2px; }
.styles button { margin: 0 1px; }
.styles .grip { margin-right: -4px; }
.combo {
  display: flex;
  align-items: center;
  gap: 2px;
  width: 87px;
  height: 16px;
  padding: 0 3px 0 13px;
  background: #e2e2e2;
  color: #222;
}
.combo.near { padding-left: 3px; }
.combo select {
  flex: 1;
  min-width: 0;
  height: 16px;
  padding: 0;
  border: 0;
  appearance: none;
  background: none;
  color: #1c1c1c;
  font: 9px/12px "Noto Sans", sans-serif;
  opacity: 1;
}
.combo .chev { width: 8px; height: 16px; }
.combo.lay { width: 219px; padding-left: 3px; }
.lay svg { width: 11px; height: 11px; }
.combo .s10 { width: 9px; height: 9px; }
.prop { gap: 4px; }
.prop .combo { width: 110px; padding-left: 4px; }
.prop .wide { width: 116px; }
.prop .slim { width: 92px; }
.prop .off { width: 87px; padding-left: 7px; background: #c9c9c9; }
.combo.mono select { font-family: "Liberation Serif", serif; font-weight: 700; }
.combo.off select { color: #888; font-weight: 400; }
.ln { width: 43px; height: 1px; margin-right: 2px; background: #222; }
.ln.short { width: 25px; }
.last { margin-left: auto; }
.dims { margin-left: 2px; }
.abc { position: relative; }
.abc span { position: absolute; top: -1px; right: 0; font-size: 6px; line-height: 8px; }

.work { display: flex; flex: 1; min-height: 0; border-top: 1px solid #444; }
.side { width: 21px; padding: 0 3px 0 1px; background: #5b5b5b; position: relative; }
.side.right { width: 24px; padding: 0 3px 0 4px; overflow: hidden; }
.strip { padding-bottom: 2px; border: 1px solid #4a4a4a; border-top: 0; }
.strip button { width: 100%; height: 16px; }
.hgrip {
  display: block;
  height: 4px;
  margin: 1px 2px 3px;
  background: repeating-linear-gradient(90deg, #444 0 1px, #6a6a6a 1px 2px);
}
.meter {
  position: absolute;
  top: 116px;
  right: 0;
  width: 7px;
  height: 42px;
  border: 2px solid #2a2f3d;
  border-top-width: 10px;
  border-right-width: 1px;
  border-radius: 3px 0 0 3px;
  background: repeating-linear-gradient(transparent 0 2px, #2a2f3d 2px 3px), linear-gradient(#b5713a, #b5a03a, #3f9c63, #2f8c9c);
}
.view {
  flex: 1;
  min-width: 0;
  display: grid;
  grid-template: 1fr 14px / 1fr 12px;
  background: #f0f0f0;
}
.canvas { position: relative; overflow: hidden; background: #000; }
.drawing { position: absolute; width: 100%; height: 100%; }
.axis { fill: #d5d5cc; font: 13px "Liberation Sans", sans-serif; }
.vlabel { position: absolute; top: 4px; left: 3px; color: #e0e0e0; }
.cube { position: absolute; top: 5px; right: 6px; width: 70px; height: 94px; color: #8b8b8b; }
.cube svg { width: 70px; height: 70px; }
.cube span { position: absolute; line-height: 12px; }
.n { top: 2px; left: 30px; }
.s { top: 57px; left: 30px; }
.w { top: 30px; left: 2px; }
.e { top: 30px; right: 3px; }
.ucs {
  position: absolute;
  top: 78px;
  left: 14px;
  width: 42px;
  height: 12px;
  border-radius: 2px;
  background: #8d8d98;
  color: #5c5c66;
  font-size: 8px;
  white-space: nowrap;
}
.vs, .hs { display: flex; justify-content: space-between; align-items: center; background: #f0f0f0; }
.vs { flex-direction: column; }
.vs svg, .hs svg { width: 12px; height: 12px; }
.vs i, .hs i { width: 12px; height: 12px; background: #cdcdcd; }
.hs { grid-column: 1 / 3; border-bottom: 2px solid #777; }
.hs i { margin-right: 478px; }

.cmd { display: flex; height: 43px; background: #5b5b5b; border-bottom: 1px solid #555; }
.ctl { width: 17px; background: linear-gradient(#8a8a8a, #3c3c3c); }
.ctl button { width: 16px; height: 17px; }
.ctl .hgrip { margin-bottom: 2px; }
.ctl svg { width: 12px; height: 12px; }
.lines { flex: 1; background: #fff; color: #222; }
.lines p {
  height: 25px;
  padding: 10px 0 0 2px;
  border-bottom: 1px solid #aaa;
  font-family: "Liberation Mono", "Noto Sans CJK SC", monospace;
}
.lines label { display: flex; align-items: center; gap: 1px; height: 17px; padding-left: 3px; }
.lines svg { width: 12px; height: 12px; color: #777; }
.lines .t { width: 8px; }
.lines input { flex: 1; padding: 0 2px; border: 0; outline: 0; font: italic 9px/12px "Noto Sans CJK SC", sans-serif; }
.lines input::placeholder { color: #999; }

.ltabs { display: flex; gap: 2px; height: 13px; padding-left: 9px; }
.ltabs a {
  width: 37px;
  background: #565656;
  color: #b5b5b5;
  text-align: center;
  clip-path: polygon(0 0, 100% 0, calc(100% - 5px) 90%, calc(100% - 8px) 100%, 8px 100%, 5px 90%);
}
.ltabs .on { width: 34px; background: #8b8b8b; color: #fff; font-weight: 700; }
.ltabs button { width: 17px; height: 12px; margin-left: 2px; border-radius: 0 0 7px 4px; background: #525252; color: #ccc; font-size: 12px; }

.status {
  display: flex;
  height: 21px;
  margin: 1px 0 0 117px;
  background: #545454;
  border: 1px solid #767676;
  border-right: 0;
}
.status button { width: 18px; }
.status .dd { width: 12px; }
.status .b { border-left: 1px solid #767676; }
.status .model { width: 22px; border-left-width: 2px; }
.coord { display: flex; align-items: center; width: 110px; padding-left: 6px; white-space: nowrap; }
.status .scale { width: 42px; color: #c5c5c5; white-space: nowrap; }
.status .blue { color: #2d8cf0; }
.status .lite { color: #ccc; }
.status .grey { color: #999; }
.under {
  height: 6px;
  background: linear-gradient(90deg, #111 109px, #2b2b2b 109px 144px, #111 144px);
}

.mark { position: absolute; right: 0; bottom: 0; width: 200px; height: 95px; }
.logo {
  position: relative;
  display: flex;
  gap: 8px;
  height: 100%;
  padding: 18px 0 0 12px;
  background: #222f55;
  color: #d0d0d0;
}
.logo svg { width: 44px; height: 60px; }
.l1 { display: flex; align-items: center; height: 34px; margin-top: 3px; font: 32px/34px Inter, sans-serif; }
.l1 b { font: 500 27px/34px "Noto Sans CJK SC", sans-serif; }
.l2 { font: 300 23px/24px Inter, sans-serif; }
.paw { position: absolute; top: -12px; left: 40px; width: 32px; height: 14px; }
.bai, .jing { position: absolute; }
.bai {
  top: 11px;
  left: -34px;
  color: #fff;
  font: 700 40px/36px "Liberation Sans", sans-serif;
  -webkit-text-stroke: 1px #ccc;
}
.jing { top: 49px; left: -30px; color: #e2e2e2; font: 22px/24px "Noto Sans", sans-serif; }
```
